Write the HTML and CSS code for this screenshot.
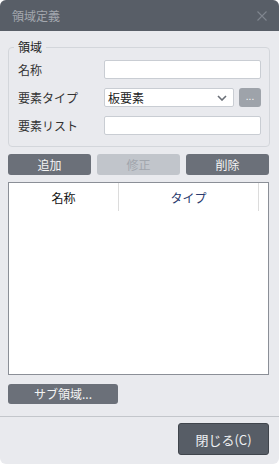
FILE: index.html
```html
<!DOCTYPE html>
<html lang="ja">
<head>
<meta charset="utf-8">
<link rel="stylesheet" href="styles.css">
</head>
<body>
<div class="window">
  <div class="titlebar">
    <span class="title">領域定義</span>
    <svg class="close" width="10" height="10" viewBox="0 0 10 10"><path d="M0.5 0.5L9.5 9.5M9.5 0.5L0.5 9.5" stroke="#7f858e" stroke-width="1.1" fill="none"/></svg>
  </div>
  <div class="content">
    <fieldset class="group">
      <legend class="legend">領域</legend>
      <div class="form">
        <label class="lbl">名称</label>
        <input class="field" type="text">
        <label class="lbl">要素タイプ</label>
        <div class="selrow">
          <div class="select">
            <span>板要素</span>
            <svg width="10" height="6" viewBox="0 0 10 6"><path d="M1 1L5 5L9 1" stroke="#6a6f77" stroke-width="1.6" fill="none"/></svg>
          </div>
          <button class="dots">...</button>
        </div>
        <label class="lbl">要素リスト</label>
        <input class="field" type="text">
      </div>
    </fieldset>
    <div class="btnrow">
      <button class="btn">追加</button>
      <button class="btn disabled">修正</button>
      <button class="btn">削除</button>
    </div>
    <div class="table">
      <div class="thead">
        <div class="th c1">名称</div>
        <div class="th c2">タイプ</div>
        <div class="th c3"></div>
      </div>
    </div>
    <div class="subrow">
      <button class="btn sub">サブ領域...</button>
    </div>
  </div>
  <div class="footer">
    <button class="closebtn">閉じる(C)</button>
  </div>
</div>
</body>
</html>
```
FILE: styles.css
```css
* { box-sizing: border-box; }
html, body { margin: 0; padding: 0; background: #ffffff; }
body { font-family: "Noto Sans CJK JP", "Noto Sans", sans-serif; font-size: 12px; color: #222; }
.window {
  width: 279px; height: 464px; background: #e9eaee;
  border-radius: 6px; overflow: hidden;
  display: flex; flex-direction: column;
}
.titlebar {
  height: 31px; background: #585e67; flex: none;
  display: flex; align-items: center; justify-content: space-between;
  padding: 0 12px 0 12px;
}
.title { color: #a3a7ae; font-size: 12px; line-height: 16px; }
.close { margin-right: 0; }
.content { padding: 0 8px; flex: 1; display: flex; flex-direction: column; }
.group {
  margin: 8px 1px 0 0; padding: 5px 8px 11px 9px;
  border: 1px solid #d3d6db; border-radius: 4px;
}
.legend { padding: 0 4px; margin-left: -4px; line-height: 16px; color: #222; }
.form {
  display: grid; grid-template-columns: 86px 157px;
  row-gap: 9px; align-items: center;
}
.lbl { color: #333; line-height: 19px; }
.field {
  height: 19px; width: 157px; margin: 0;
  border: 1px solid #c9cdd3; border-radius: 2px; background: #fff; padding: 0 3px;
}
.selrow { display: flex; gap: 5px; }
.select {
  width: 130px; height: 19px; background: #fff;
  border: 1px solid #c9cdd3; border-radius: 2px;
  display: flex; align-items: center; justify-content: space-between;
  padding: 0 6px 0 3px; color: #222; line-height: 17px;
}
.dots {
  width: 22px; height: 19px; margin: 0; padding: 0 0 4px 0;
  background: #9ea3aa; border: none; border-radius: 3px;
  color: #f2f2f2; font-size: 10px; line-height: 10px; font-family: inherit;
}
.btnrow {
  margin-top: 7px; display: grid; grid-template-columns: repeat(3, 83px);
  column-gap: 6px; width: 261px;
}
.btn {
  height: 21px; margin: 0; padding: 0; border: none; border-radius: 3px;
  background: #6b7079; color: #f4f4f4; font-family: inherit; font-size: 12px; line-height: 21px;
}
.btn.disabled { background: #c1c5cb; color: #a1a6ad; }
.table {
  margin-top: 7px; width: 261px; height: 193px;
  background: #fff; border: 1px solid #8b8f97;
}
.thead { display: flex; height: 29px; }
.th { display: flex; align-items: center; justify-content: center; height: 28px; margin-top: 0; }
.c1 { width: 110px; color: #111; border-right: 1px solid #dcdcdc; }
.c2 { width: 140px; color: #2a3a6e; border-right: 1px solid #dcdcdc; }
.c3 { flex: 1; }
.subrow { margin-top: 9px; }
.btn.sub { width: 110px; height: 20px; line-height: 20px; }
.footer {
  flex: none; height: 48px; border-top: 1px solid #c3c6cb;
  display: flex; justify-content: flex-end; align-items: flex-start;
  padding: 6px 10px 0 0;
}
.closebtn {
  width: 91px; height: 32px; margin: 0; padding: 0;
  background: #575d66; border: 1px solid #40454c; border-radius: 3px;
  color: #eef0f2; font-family: inherit; font-size: 13px;
}
```
